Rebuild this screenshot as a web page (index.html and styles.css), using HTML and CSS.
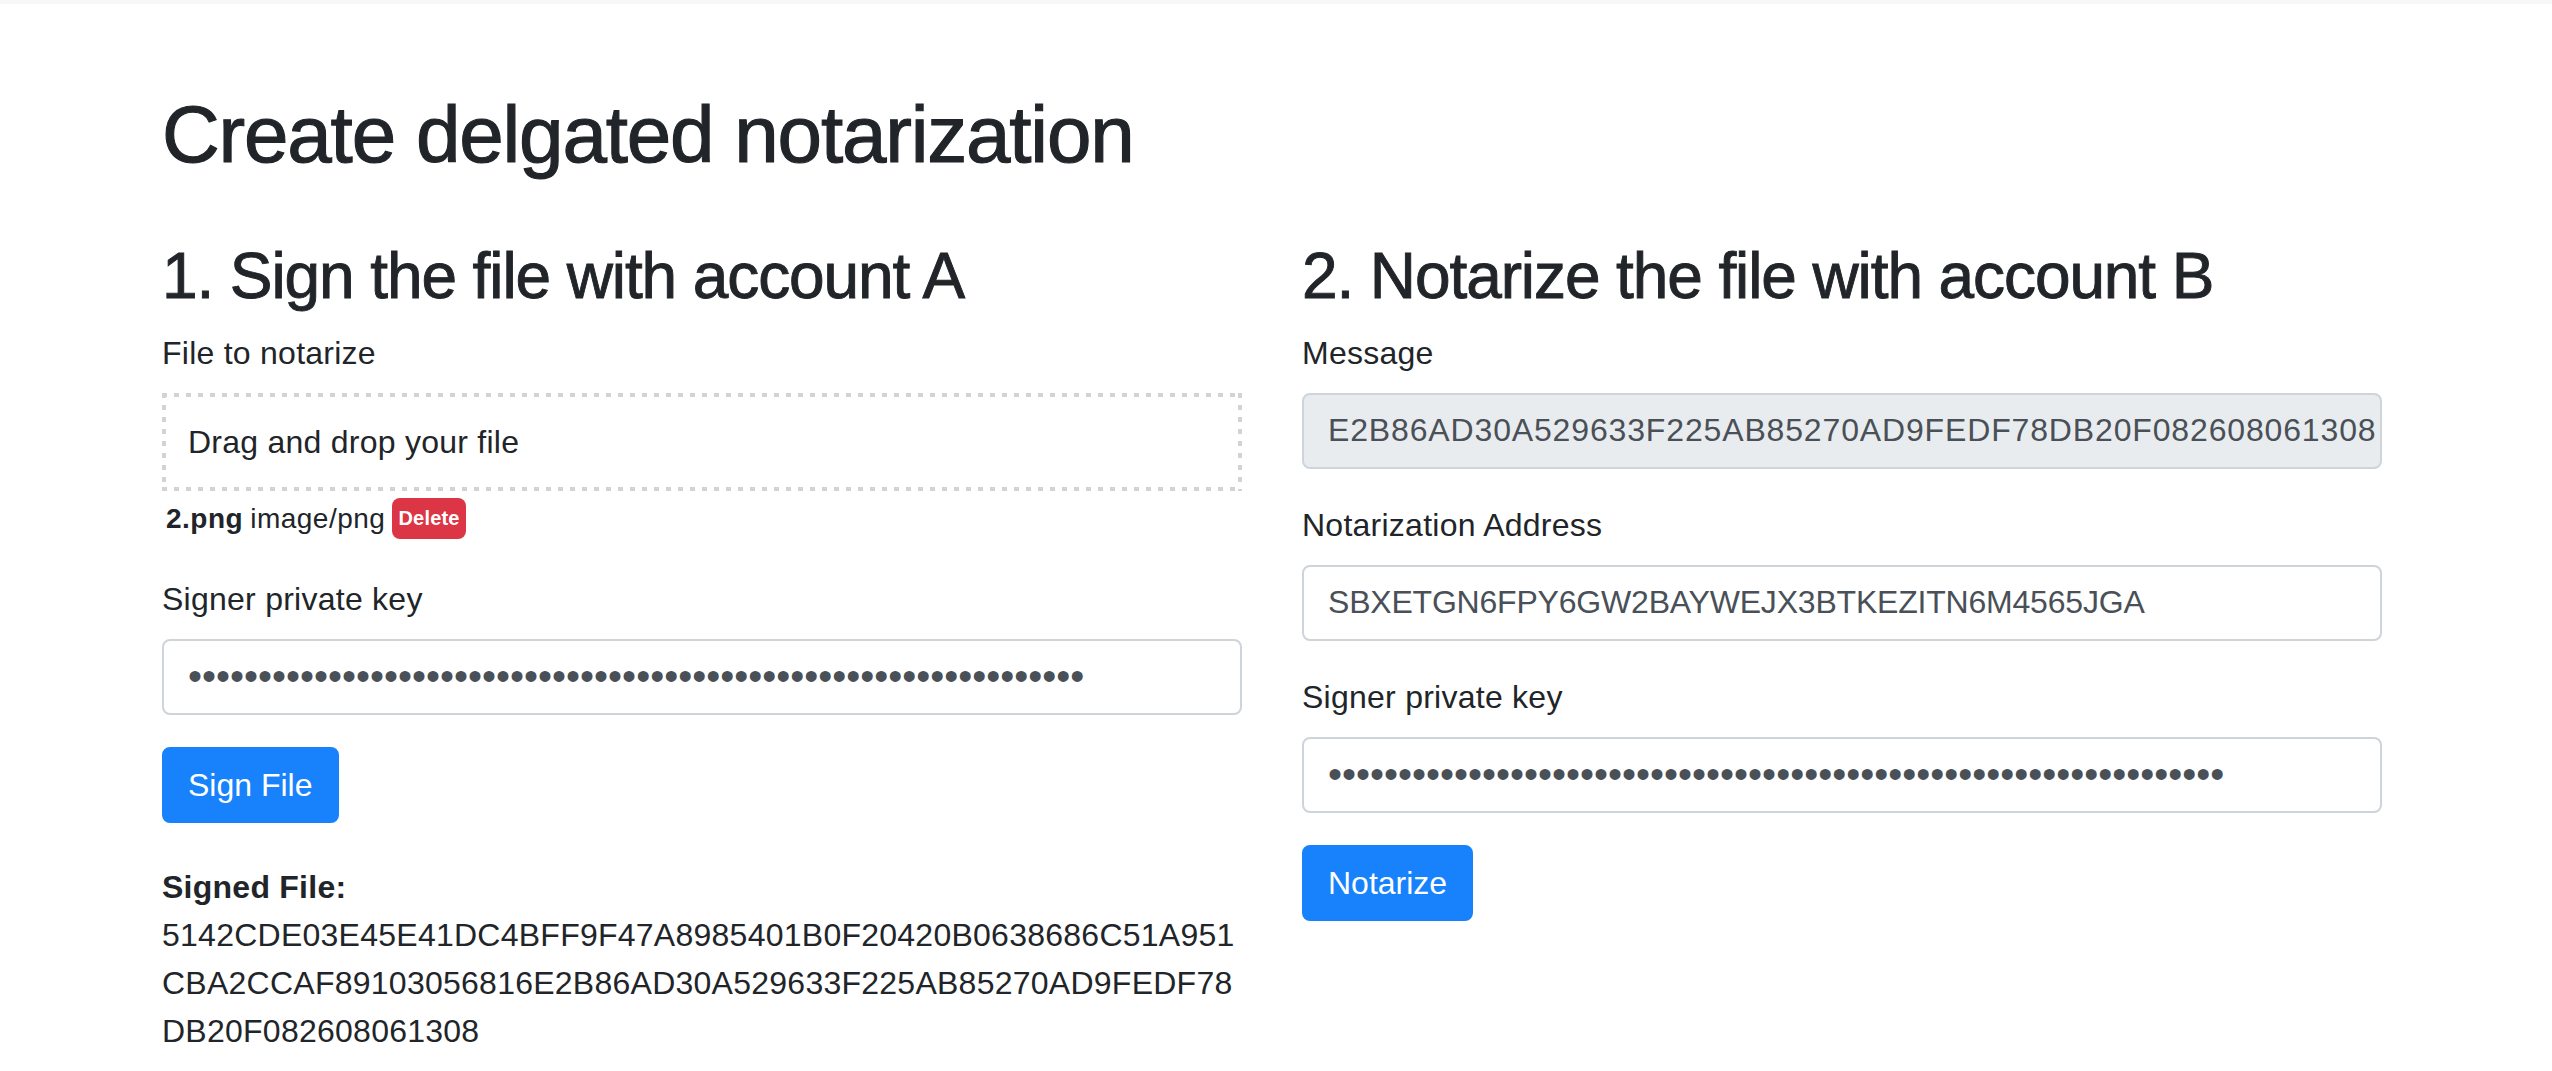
FILE: index.html
```html
<!DOCTYPE html>
<html lang="en">
<head>
<meta charset="utf-8">
<title>Create delgated notarization</title>
<link rel="stylesheet" href="styles.css">
</head>
<body>
<div class="topbar"></div>
<main class="container">
  <h1 class="title">Create delgated notarization</h1>
  <div class="row">
    <section class="col">
      <h2 class="step">1. Sign the file with account A</h2>
      <div class="group group-file">
        <label class="label">File to notarize</label>
        <div class="dropzone">Drag and drop your file</div>
        <div class="file-info">
          <strong class="file-name">2.png</strong>
          <span class="file-type">image/png</span>
          <span class="badge-delete">Delete</span>
        </div>
      </div>
      <div class="group">
        <label class="label" for="keyA">Signer private key</label>
        <input class="field field-secret" id="keyA" type="password" value="5142CDE03E45E41DC4BFF9F47A8985401B0F20420B0638686C51A951CBA2CCAF">
      </div>
      <button class="btn" type="button">Sign File</button>
      <div class="signed">
        <strong>Signed File:</strong>
        <div class="hash">
          <span class="hash-line">5142CDE03E45E41DC4BFF9F47A8985401B0F20420B0638686C51A951</span>
          <span class="hash-line">CBA2CCAF89103056816E2B86AD30A529633F225AB85270AD9FEDF78</span>
          <span class="hash-line">DB20F082608061308</span>
        </div>
      </div>
    </section>
    <section class="col">
      <h2 class="step">2. Notarize the file with account B</h2>
      <div class="group">
        <label class="label" for="msg">Message</label>
        <input class="field field-readonly" id="msg" type="text" readonly value="E2B86AD30A529633F225AB85270AD9FEDF78DB20F082608061308">
      </div>
      <div class="group">
        <label class="label" for="addr">Notarization Address</label>
        <input class="field field-address" id="addr" type="text" value="SBXETGN6FPY6GW2BAYWEJX3BTKEZITN6M4565JGA">
      </div>
      <div class="group">
        <label class="label" for="keyB">Signer private key</label>
        <input class="field field-secret" id="keyB" type="password" value="9A1F0C3E7B2D4856A0C1E3F5B7D9024681357ACE0BDF2468ACE13579BDF02468">
      </div>
      <button class="btn" type="button">Notarize</button>
    </section>
  </div>
</main>
</body>
</html>
```

FILE: styles.css
```css
* {
  box-sizing: border-box;
}

html, body {
  margin: 0;
  padding: 0;
  background: #ffffff;
}

body {
  font-family: "Liberation Sans", Arial, sans-serif;
  font-size: 32px;
  line-height: 48px;
  letter-spacing: 0.25px;
  color: #212529;
}

.topbar {
  height: 4px;
  background: #f6f7f8;
}

.container {
  width: 2220px;
  margin-left: 162px;
  padding-top: 83px;
}

.title {
  margin: 0 0 16px;
  font-size: 80px;
  line-height: 96px;
  font-weight: 400;
  letter-spacing: -1.2px;
  -webkit-text-stroke: 1.1px #212529;
}

.row {
  display: flex;
  gap: 60px;
  padding-top: 39px;
}

.col {
  flex: 0 0 1080px;
  width: 1080px;
}

.step {
  margin: 0 0 14px;
  font-size: 64px;
  line-height: 76.8px;
  font-weight: 400;
  letter-spacing: -1.1px;
  -webkit-text-stroke: 0.9px #212529;
}

.group {
  margin-bottom: 32px;
}

.group-file {
  margin-bottom: 0;
}

.label {
  display: block;
  margin-bottom: 16px;
}

.dropzone {
  height: 98px;
  padding: 25px 26px 25px;
  line-height: 48px;
  background:
    repeating-linear-gradient(to right, #d3d3d3 0 5px, transparent 5px 12px) left top / 100% 4px no-repeat,
    repeating-linear-gradient(to right, #d3d3d3 0 5px, transparent 5px 12px) left bottom / 100% 4px no-repeat,
    repeating-linear-gradient(to bottom, #d3d3d3 0 5px, transparent 5px 12px) left top / 4px 100% no-repeat,
    repeating-linear-gradient(to bottom, #d3d3d3 0 5px, transparent 5px 12px) right top / 4px 100% no-repeat;
}

.file-info {
  display: flex;
  align-items: center;
  gap: 7px;
  height: 44px;
  margin-top: 6px;
  margin-bottom: 34px;
  padding-left: 4px;
  font-size: 28px;
  line-height: 44px;
  letter-spacing: 0.5px;
}

.file-name {
  font-weight: 700;
}

.badge-delete {
  display: inline-block;
  padding: 9px 6px;
  font-size: 20px;
  line-height: 23px;
  font-weight: 700;
  letter-spacing: 0.2px;
  color: #ffffff;
  background: #dc3545;
  border-radius: 8px;
}

.field {
  display: block;
  width: 100%;
  height: 76px;
  padding: 12px 24px;
  font-family: inherit;
  font-size: 32px;
  line-height: 48px;
  letter-spacing: 0.25px;
  color: #495057;
  background: #ffffff;
  border: 2px solid #ced4da;
  border-radius: 8px;
  outline: none;
}

.field-readonly {
  padding-right: 0;
  background: #e9ecef;
  letter-spacing: 0.85px;
}

.field-address {
  letter-spacing: -0.2px;
}

.field-secret {
  font-size: 40px;
  letter-spacing: 0;
}

.btn {
  display: inline-block;
  height: 76px;
  padding: 12px 24px;
  font-family: inherit;
  font-size: 32px;
  line-height: 48px;
  letter-spacing: 0;
  color: #ffffff;
  background: #1782fb;
  border: 2px solid #1782fb;
  border-radius: 8px;
  cursor: pointer;
}

.signed {
  margin-top: 40px;
}

.hash-line {
  display: block;
  white-space: nowrap;
}
```
